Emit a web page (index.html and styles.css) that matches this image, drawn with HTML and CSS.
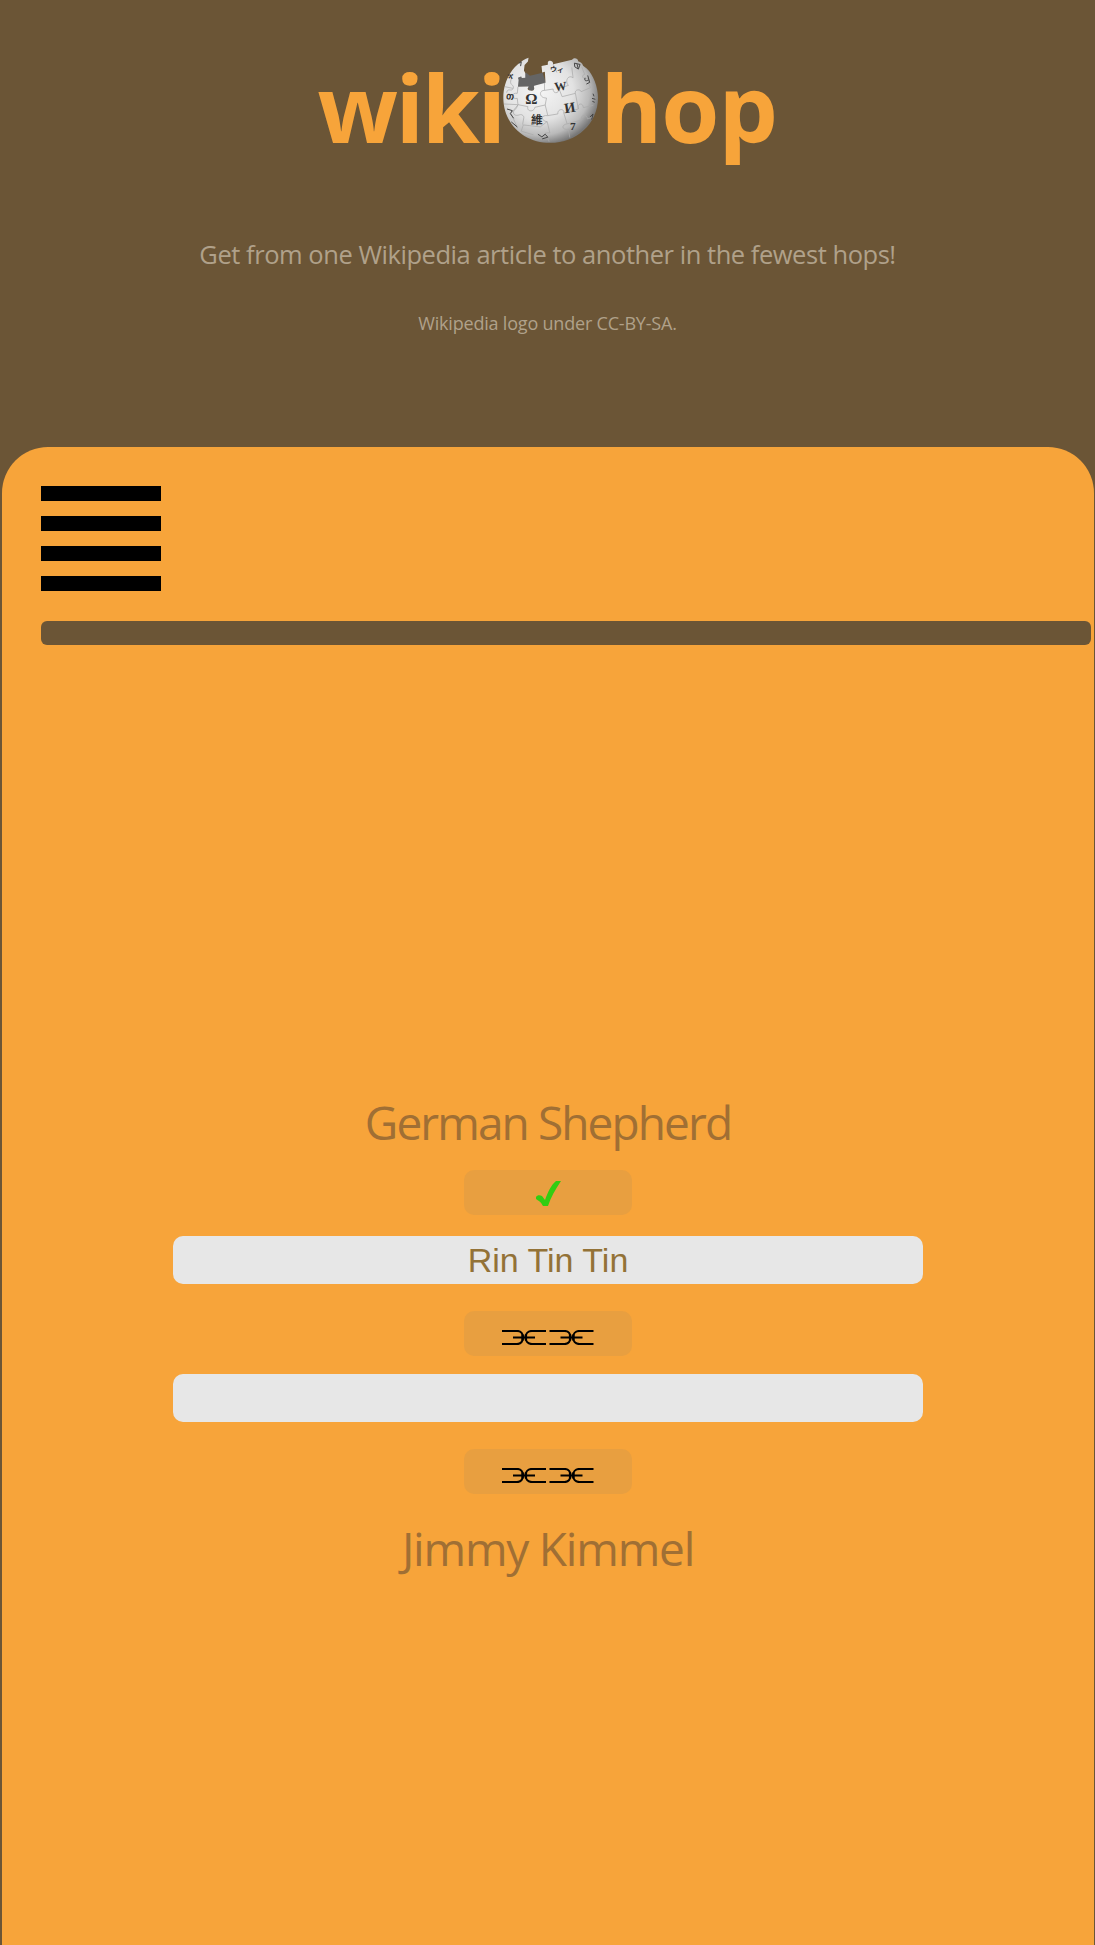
FILE: index.html
```
<!DOCTYPE html>
<html lang="en">
<head>
<meta charset="utf-8">
<title>wikihop</title>
<link rel="stylesheet" href="styles.css">
</head>
<body>
<svg class="defs" width="0" height="0" aria-hidden="true">
  <symbol id="chain" viewBox="0 0 92 15">
    <g id="link" fill="none" stroke="#000" stroke-width="2.200">
      <path d="M0 1H15C19 1 21 4 21 7.500S19 14 15 14H0M44 1H30C26 1 23.500 4 23.500 7.500S26 14 30 14H44M11 7.500H33"/>
      <path d="M20.500 4.500V10.500M24 4.500V10.500"/>
    </g>
    <use href="#link" x="47.500"/>
  </symbol>
</svg>
<header class="hero">
  <h1 class="logo">
    <span class="wiki">wiki</span>
    <svg class="globe" viewBox="36 36 292 261" aria-label="Wikipedia globe">
      <defs>
        <radialGradient id="ball" cx=".38" cy=".38" r=".65">
          <stop offset="0" stop-color="#f6f6f6"/><stop offset=".55" stop-color="#e2e2e2"/>
          <stop offset=".82" stop-color="#bababa"/><stop offset="1" stop-color="#777"/>
        </radialGradient>
      </defs>
      <path d="M84 92L104 89L108 82L120 92L158 83L170 118L132 125L134 134L120 139L112 125L84 126Z" fill="#656565"/>
      <path fill="url(#ball)" d="M116 38C84 49 40 91 40 158C40 236 102 294 181 294S325 236 325 158C325 127 311 88 291 70L280 62C278 52 270 50 265 48C266 38 250 36 247 44L190 57C190 47 178 44 174 51L174 59L155 63L157 82L165 80L167 113L133 122C130 126 135 128 132 134C128 139 114 137 113 131L116 124L84 125L86 105L84 98L89 96C95 92 96 96 95 99L106 98L106 84L102 76L104 60L114 49Z"/>
      <g fill="none" stroke="#aaa" stroke-width="2.200">
        <path d="M64 101C56 123 73 116 70 130C64 142 53 126 50 143M84 125L82 145C63 141 65 165 82 160L84 179L114 185C109 200 132 203 135 187L166 180L170 159C149 160 145 136 164 136L164 113M164 136L190 132C190 149 210 145 207 130L236 121C224 109 235 87 250 98L246 67M190 57L201 82M42 177L83 179C82 194 65 196 72 208C83 218 94 200 102 216L98 239M166 180L174 212C150 209 155 230 172 230L180 264C157 261 156 281 174 280L178 291M174 212L204 207C203 190 225 190 222 204L266 192C260 175 280 171 281 188L311 181M222 204L232 237C214 239 215 256 236 253L240 278M172 230L151 246L100 240L94 259L131 270M207 130L217 155L257 145C253 134 272 130 274 140L302 128L293 99C282 106 272 91 285 88L276 65M257 145L266 192M232 237L276 225C271 206 294 208 293 222L309 217M85 179L63 205L83 250M45 125L69 130"/>
      </g>
      <g class="glyphs">
        <text x="106" y="177" font-size="46">Ω</text>
        <text x="195" y="138" font-size="37" transform="rotate(-6 195 138)">W</text>
        <text x="226" y="205" font-size="43" transform="rotate(-9 226 205)">И</text>
        <text class="cjk" x="123" y="237" font-size="35">維</text>
        <text x="241" y="254" font-size="34" class="bold">7</text>
        <text class="cjk" x="180" y="79" font-size="21" transform="rotate(5 180 79)">ウィ</text>
        <text x="49" y="163" font-size="29" transform="rotate(5 49 163)">თ</text>
        <text x="61" y="105" font-size="25" transform="rotate(-35 61 105)">ት</text>
      </g>
      <g fill="none" stroke="#444" stroke-width="4">
        <path d="M254 54L271 58L266 72L255 65ZM262 57L265 69M286 98C283 110 291 108 298 104M294 91L300 112L290 117M51 192L67 197L61 206L71 220M87 54L94 50L92 63M144 268L156 276L166 268L174 277L157 282M301 216L310 207L306 224M64 231L82 246M310 146L313 154M307 160L317 163M308 169L315 172" stroke-width="3"/>
      </g>
    </svg>
    <span class="hop">hop</span>
  </h1>
  <p class="tagline">Get from one Wikipedia article to another in the fewest hops!</p>
  <p class="credit">Wikipedia logo under CC-BY-SA.</p>
</header>
<main class="panel">
  <div class="menu"><i></i><i></i><i></i><i></i></div>
  <div class="divider"></div>
  <section class="game">
    <div class="article start"><span>German Shepherd</span></div>
    <button class="status" aria-label="Linked"><svg class="check" viewBox="0 0 25 25"><path d="M0 16C1 14 4 14 6 15L9 19C12 11 15 4 20 0H25C19 9 15 16 12 25L7 25C5 21 3 20 0 18Z" fill="#32cd12"/></svg></button>
    <input class="field first" value="Rin Tin Tin" aria-label="First hop">
    <button class="status" aria-label="Check link"><svg class="chain"><use href="#chain"/></svg></button>
    <input class="field second" aria-label="Second hop">
    <button class="status" aria-label="Check link"><svg class="chain"><use href="#chain"/></svg></button>
    <div class="article end"><span>Jimmy Kimmel</span></div>
  </section>
</main>
</body>
</html>
```
FILE: styles.css
```
* { box-sizing: border-box; }
body { margin: 0; height: 1945px; overflow: hidden; background: #6b5536; font-family: "Open Sans", "Noto Sans", sans-serif; }
.defs { display: block; }
.hero { height: 447px; display: flex; flex-direction: column; align-items: center; color: #b0a18a; white-space: nowrap; }
.logo { width: 462px; height: 140px; margin: 37px 0 0; display: flex; color: #f7a43a; font-size: 94px; line-height: 140px; font-weight: 700; }
.wiki { width: 185px; padding-left: 1px; letter-spacing: -2.500px; }
.globe { width: 97px; height: 87px; margin-top: 20px; }
.hop { margin-left: 2px; letter-spacing: -1px; }
.glyphs { fill: #333; font-family: "Liberation Serif", serif; }
.cjk { font-family: "Noto Sans CJK TC", sans-serif; }
.bold { font-weight: 700; }
.tagline { margin: 59px 0 0; font-size: 25.500px; line-height: 36px; letter-spacing: -.46px; }
.credit { margin: 38px 0 0; font-size: 18px; line-height: 26px; letter-spacing: -.2px; }
.panel { width: 1092px; height: 1498px; margin-left: 2px; padding: 39px 3px 0 39px; background: #f7a43a; border-radius: 46px 46px 0 0; }
.menu { width: 120px; display: grid; gap: 15px; }
.menu i { height: 15px; background: #000; }
.divider { height: 24px; margin-top: 30px; border-radius: 6px; background: #6b5536; }
.game { width: 750px; margin: 447px 0 0 132px; display: flex; flex-direction: column; align-items: center; }
.article { height: 60px; line-height: 60px; font-size: 46px; color: #a06f34; white-space: nowrap; }
.status { width: 168px; height: 45px; padding: 0; border: 0; border-radius: 10px; background: #e89f40; display: flex; justify-content: center; align-items: center; }
.start { margin-bottom: 18px; letter-spacing: -1.900px; }
.check { width: 25px; height: 25px; margin-top: 2px; }
.chain { width: 92px; height: 15px; margin-top: 8px; }
.field { width: 750px; height: 48px; padding: 0; border: 0; border-radius: 10px; background: #e7e7e7; color: #937237; font: 34px/48px "Liberation Sans", Arial, sans-serif; text-align: center; }
.first { margin: 21px 0 27px; }
.second { margin: 18px 0 27px; }
.end { margin-top: 24px; letter-spacing: -1.200px; }
```
